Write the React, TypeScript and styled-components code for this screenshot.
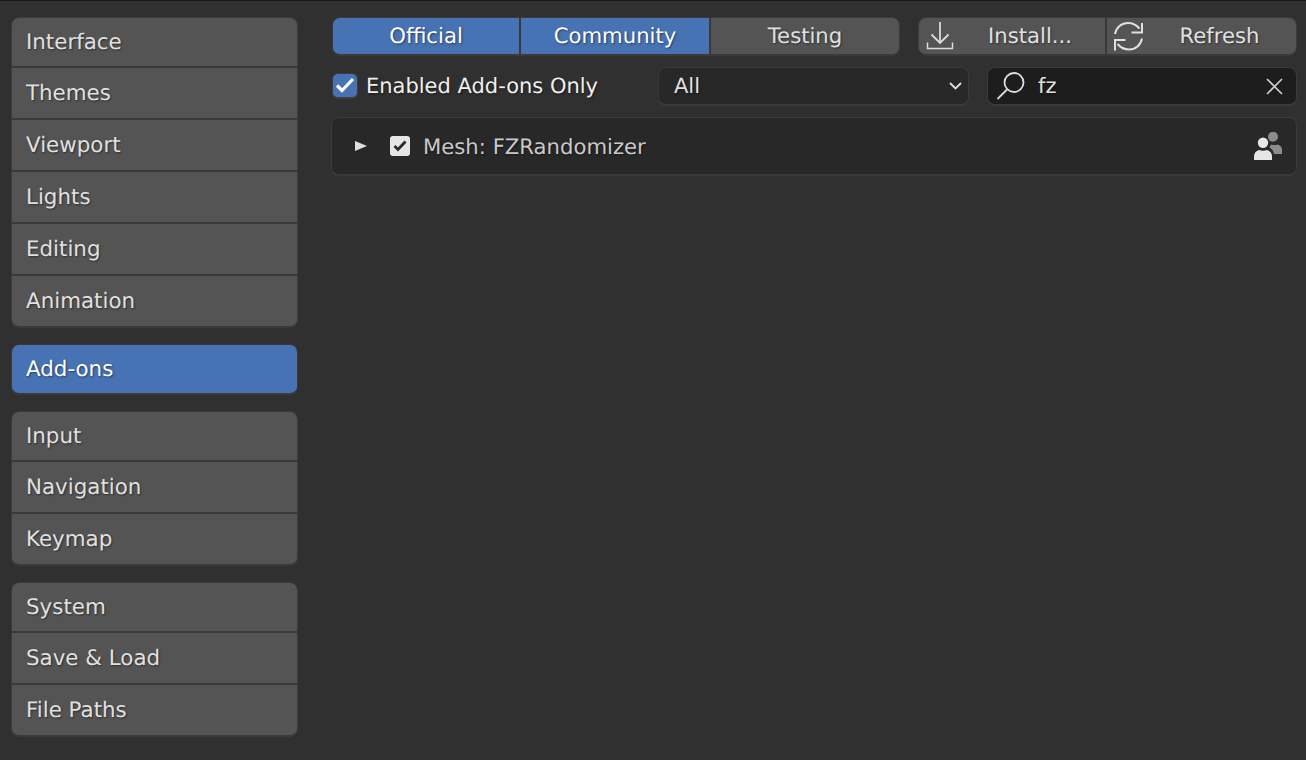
import styled, { createGlobalStyle } from 'styled-components';

const GlobalStyle = createGlobalStyle`
  html, body {
    margin: 0;
    padding: 0;
    background: #303030;
  }
  * {
    box-sizing: border-box;
  }
`;

const sidebarGroups = [
  { names: ['Interface', 'Themes', 'Viewport', 'Lights', 'Editing', 'Animation'] },
  { names: ['Add-ons'], active: true },
  { names: ['Input', 'Navigation', 'Keymap'] },
  { names: ['System', 'Save & Load', 'File Paths'] },
];

function DownloadIcon() {
  return (
    <svg width="29" height="30" viewBox="0 0 29 30" fill="none" stroke="#dcdcdc" strokeWidth="1.8">
      <path d="M14 1v21M5.500 13.500l8.500 8.500 8.500-8.500" />
      <path d="M1.500 21.500v6h25v-6" strokeWidth="1.500" />
    </svg>
  );
}

function RefreshIcon() {
  return (
    <svg width="29" height="29" viewBox="0 0 29 29" fill="none" stroke="#e0e0e0" strokeWidth="2">
      <path d="M1 12C2.200 5.500 7.500 1 14 1c4.800 0 8.500 2 11.500 5.500" />
      <path d="M28 1v9.500H17.500" />
      <path d="M28 16.500C26.800 23 21.500 27.500 15 27.500c-4.800 0-8.500-2-11.500-5.500" />
      <path d="M1 28.500V18h10.500" />
    </svg>
  );
}

function SearchIcon() {
  return (
    <svg width="30" height="30" viewBox="0 0 30 30" fill="none" stroke="#dcdcdc" strokeWidth="1.8">
      <circle cx="18" cy="11.500" r="9.500" />
      <path d="M11 18.500 1.500 28" />
    </svg>
  );
}

function CloseIcon() {
  return (
    <svg width="17" height="17" viewBox="0 0 17 17" fill="none" stroke="#cfcfcf" strokeWidth="1.600">
      <path d="M1 1l15 15M16 1L1 16" />
    </svg>
  );
}

function CommunityIcon() {
  return (
    <svg width="28" height="28" viewBox="0 0 28 28">
      <circle cx="19" cy="4.700" r="5" fill="#8c8c8c" />
      <path d="M17 12.500c2 .8 4.500.8 6.500 0 2.500.8 4.500 2.500 4.500 5V22h-8c-.5-3-2-5-4.500-6.500z" fill="#8c8c8c" />
      <circle cx="9" cy="10.700" r="5.200" fill="#e6e6e6" />
      <path d="M0 28v-3.500c0-3.500 2-5.500 5-6.500 2.500 1 5.500 1 8 0 3 1 5 3 5 6.500V28z" fill="#e6e6e6" />
    </svg>
  );
}

export default function App() {
  return (
    <Window>
      <GlobalStyle />
      <Sidebar>
        {sidebarGroups.map((group) => (
          <SideGroup key={group.names[0]}>
            {group.names.map((name) => (
              <SideItem key={name} $active={group.active}>
                {name}
              </SideItem>
            ))}
          </SideGroup>
        ))}
      </Sidebar>

      <Main>
        <TopRow>
          <ButtonGroup $width={568}>
            <TabButton $active>
              <ButtonLabel>Official</ButtonLabel>
            </TabButton>
            <TabButton $active>
              <ButtonLabel>Community</ButtonLabel>
            </TabButton>
            <TabButton>
              <ButtonLabel>Testing</ButtonLabel>
            </TabButton>
          </ButtonGroup>
          <ButtonGroup $width={379}>
            <TabButton>
              <ButtonIcon>
                <DownloadIcon />
              </ButtonIcon>
              <ButtonLabel>Install...</ButtonLabel>
            </TabButton>
            <TabButton>
              <ButtonIcon>
                <RefreshIcon />
              </ButtonIcon>
              <ButtonLabel>Refresh</ButtonLabel>
            </TabButton>
          </ButtonGroup>
        </TopRow>

        <FilterRow>
          <CheckLabel>
            <BlueCheck>
              <svg width="20" height="16" viewBox="0 0 20 16" fill="none" stroke="#fff" strokeWidth="3.200">
                <path d="M2 8.500l5 5L18 2" />
              </svg>
            </BlueCheck>
            Enabled Add-ons Only
          </CheckLabel>
          <Select>
            All
            <svg width="13" height="8" viewBox="0 0 13 8" fill="none" stroke="#e0e0e0" strokeWidth="1.800">
              <path d="M1 1l5.500 5.500L12 1" />
            </svg>
          </Select>
          <SearchBox>
            <SearchIcon />
            <SearchText>fz</SearchText>
            <CloseIcon />
          </SearchBox>
        </FilterRow>

        <AddonPanel>
          <Arrow />
          <AddonCheck>
            <svg width="14" height="12" viewBox="0 0 14 12" fill="none" stroke="#2a2a2a" strokeWidth="2.800">
              <path d="M1.500 6l3.500 3.500L12.500 1.500" />
            </svg>
          </AddonCheck>
          <AddonName>Mesh: FZRandomizer</AddonName>
          <CommunityIcon />
        </AddonPanel>
      </Main>
    </Window>
  );
}

const Window = styled.div`
  width: 1306px;
  height: 760px;
  overflow: hidden;
  display: flex;
  gap: 34px;
  padding: 16px 9px 0 11px;
  background: #303030;
  border-top: 1px solid #161616;
  font-family: 'DejaVu Sans', sans-serif;
  font-size: 21px;
  text-rendering: geometricPrecision;
  color: #e0e0e0;
  text-shadow: 1px 1px 2px rgba(0, 0, 0, 0.45);
`;

const Sidebar = styled.nav`
  width: 287px;
  flex: none;
  display: flex;
  flex-direction: column;
  gap: 16px;
`;

const SideGroup = styled.div`
  display: flex;
  flex-direction: column;
  gap: 2px;
  border: 1px solid #3a3a3a;
  border-bottom-width: 2px;
  border-radius: 8px;
  background: #3a3a3a;
  overflow: hidden;
`;

const SideItem = styled.div<{ $active?: boolean }>`
  height: 50px;
  padding-left: 14px;
  display: flex;
  align-items: center;
  font-size: 21.4px;
  background: ${({ $active }) => ($active ? '#4772b3' : '#545454')};
  color: ${({ $active }) => ($active ? '#ffffff' : '#e0e0e0')};

  &:first-child {
    height: 48px;
  }
`;

const Main = styled.main`
  flex: 1;
  display: flex;
  flex-direction: column;
`;

const TopRow = styled.div`
  display: flex;
  justify-content: space-between;
`;

const ButtonGroup = styled.div<{ $width: number }>`
  width: ${({ $width }) => $width}px;
  height: 39px;
  display: flex;
  gap: 2px;
  border: 1px solid #3a3a3a;
  border-bottom-width: 2px;
  border-radius: 8px;
  background: #3a3a3a;
  overflow: hidden;
`;

const TabButton = styled.div<{ $active?: boolean }>`
  flex: 1;
  display: flex;
  align-items: center;
  background: ${({ $active }) => ($active ? '#4772b3' : '#545454')};
  color: ${({ $active }) => ($active ? '#ffffff' : '#e0e0e0')};

  &:first-child {
    flex: none;
    width: 186px;
  }
`;

const ButtonIcon = styled.span`
  width: 36px;
  flex: none;
  display: flex;
  justify-content: flex-end;
`;

const ButtonLabel = styled.span`
  flex: 1;
  text-align: center;
  padding-bottom: 2px;
  font-size: 21.2px;
`;

const FilterRow = styled.div`
  margin-top: 11px;
  height: 39px;
  display: flex;
  align-items: center;
`;

const CheckLabel = styled.div`
  width: 326px;
  flex: none;
  display: flex;
  align-items: center;
  gap: 8px;
  padding-bottom: 2px;
  color: #f0f0f0;
`;

const BlueCheck = styled.div`
  width: 26px;
  height: 26px;
  display: flex;
  align-items: center;
  justify-content: center;
  background: #4772b3;
  border: 1px solid #3d3d3d;
  border-bottom-width: 2px;
  border-radius: 6px;
`;

const Select = styled.div`
  width: 311px;
  height: 39px;
  flex: none;
  display: flex;
  align-items: center;
  justify-content: space-between;
  padding: 0 6px 0 15px;
  background: #282828;
  border: 1px solid #3a3a3a;
  border-bottom-width: 2px;
  border-radius: 8px;
`;

const SearchBox = styled.div`
  width: 310px;
  height: 39px;
  margin-left: 18px;
  flex: none;
  display: flex;
  align-items: center;
  padding: 0 13px 0 8px;
  background: #1d1d1d;
  border: 1px solid #3a3a3a;
  border-bottom-width: 2px;
  border-radius: 8px;
`;

const SearchText = styled.span`
  flex: 1;
  margin-left: 12px;
`;

const AddonPanel = styled.section`
  margin: 11px 0 0 -1px;
  width: 966px;
  height: 59px;
  display: flex;
  align-items: center;
  padding: 0 14px 0 23px;
  background: #282828;
  border: 1px solid #3a3a3a;
  border-bottom-width: 2px;
  border-radius: 8px;
`;

const Arrow = styled.div`
  width: 0;
  height: 0;
  border-left: 12px solid #e0e0e0;
  border-top: 5.500px solid transparent;
  border-bottom: 5.500px solid transparent;
`;

const AddonCheck = styled.div`
  width: 20px;
  height: 20px;
  margin-left: 23px;
  display: flex;
  align-items: center;
  justify-content: center;
  background: #e6e6e6;
  border-radius: 3px;
`;

const AddonName = styled.span`
  flex: 1;
  margin-left: 13px;
  font-size: 21.2px;
  color: #c9c9c9;
`;
